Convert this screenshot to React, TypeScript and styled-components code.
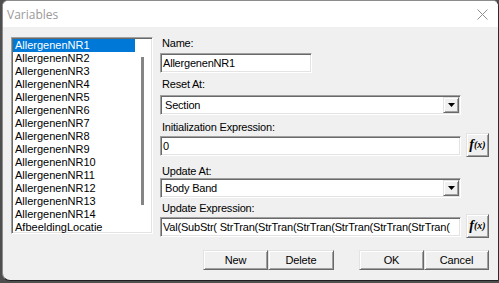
import styled, { createGlobalStyle } from "styled-components";

const GlobalStyle = createGlobalStyle`
  html, body {
    margin: 0;
    padding: 0;
  }
  body {
    width: 499px;
    height: 283px;
    overflow: hidden;
    background: #4f4f4f;
    font-family: "Liberation Sans", Arial, sans-serif;
    font-size: 11px;
    color: #000;
  }
`;

const variables = [
  "AllergenenNR1",
  "AllergenenNR2",
  "AllergenenNR3",
  "AllergenenNR4",
  "AllergenenNR5",
  "AllergenenNR6",
  "AllergenenNR7",
  "AllergenenNR8",
  "AllergenenNR9",
  "AllergenenNR10",
  "AllergenenNR11",
  "AllergenenNR12",
  "AllergenenNR13",
  "AllergenenNR14",
  "AfbeeldingLocatie",
];

const Window = styled.div`
  box-sizing: border-box;
  margin-left: 2px;
  width: 497px;
  height: 281px;
  background: #f0f0f0;
  border: 1px solid #8c8c8c;
  border-right-color: #2b2b2b;
  border-bottom-color: #1f1f1f;
  border-radius: 6px 6px 0 8px;
  overflow: hidden;
  display: flex;
  flex-direction: column;
`;

const TitleBar = styled.div`
  height: 26px;
  background: #fff;
  display: flex;
  align-items: center;
  justify-content: space-between;
  padding: 0 10px 0 4px;
  flex-shrink: 0;
`;

const Title = styled.span`
  font-family: "Open Sans", "Noto Sans", sans-serif;
  font-size: 12px;
  color: #9a9a9a;
  margin-top: 1px;
`;

const CloseIcon = () => (
  <svg width="11" height="11" viewBox="0 0 11 11">
    <path d="M0.5 0.5 L10.5 10.5 M10.5 0.5 L0.5 10.5" stroke="#8f8f8f" strokeWidth="1" fill="none" />
  </svg>
);

const Client = styled.div`
  flex: 1;
  display: flex;
  gap: 7px;
  padding: 10px 9px 0 8px;
`;

const ListBox = styled.div`
  box-sizing: border-box;
  position: relative;
  width: 142px;
  height: 197px;
  background: #fff;
  border: 1px solid;
  border-color: #a0a0a0 #fff #fff #a0a0a0;
  box-shadow: inset 1px 1px #696969, inset -1px -1px #e3e3e3;
  padding: 1px 17px 0 1px;
  overflow: hidden;
`;

const ListItem = styled.div<{ $selected?: boolean }>`
  height: 13px;
  line-height: 13px;
  padding-left: 2px;
  white-space: nowrap;
  background: ${(p) => (p.$selected ? "#0078d7" : "transparent")};
  color: ${(p) => (p.$selected ? "#fff" : "#000")};
`;

const ScrollThumb = styled.div`
  position: absolute;
  left: 129px;
  top: 19px;
  width: 3px;
  height: 148px;
  background: #858585;
`;

const Form = styled.div`
  width: 329px;
  display: flex;
  flex-direction: column;
`;

const Field = styled.div<{ $top: number; $gap: number }>`
  display: flex;
  flex-direction: column;
  gap: ${(p) => p.$gap}px;
  margin-top: ${(p) => p.$top}px;
`;

const Label = styled.label`
  height: 13px;
  line-height: 13px;
  padding-left: 2px;
  letter-spacing: -0.2px;
`;

const Row = styled.div`
  display: flex;
  align-items: center;
  gap: 5px;
  height: 20px;
`;

const TextBox = styled.div<{ $width: number }>`
  box-sizing: border-box;
  width: ${(p) => p.$width}px;
  height: 20px;
  background: #fff;
  border: 1px solid;
  border-color: #a0a0a0 #fff #fff #a0a0a0;
  box-shadow: inset 1px 1px #696969, inset -1px -1px #e3e3e3;
  padding: 0 2px 0 2px;
  line-height: 18px;
  white-space: nowrap;
  overflow: hidden;
  letter-spacing: -0.2px;
`;

const Select = styled(TextBox)`
  display: flex;
  align-items: center;
  justify-content: space-between;
  padding: 0 1px 0 4px;
`;

const DropButton = styled.div`
  box-sizing: border-box;
  width: 16px;
  height: 16px;
  background: #f0f0f0;
  border: 1px solid;
  border-color: #e3e3e3 #696969 #696969 #e3e3e3;
  box-shadow: inset 1px 1px #fff, inset -1px -1px #a0a0a0;
  display: flex;
  align-items: center;
  justify-content: center;
`;

const FxButton = styled.div`
  box-sizing: border-box;
  width: 23px;
  height: 24px;
  margin: -3px 0 -1px;
  background: #f0f0f0;
  border: 1px solid;
  border-color: #e3e3e3 #696969 #696969 #e3e3e3;
  box-shadow: inset 1px 1px #fff, inset -1px -1px #a0a0a0;
  display: flex;
  align-items: center;
  justify-content: center;
  font-family: "Liberation Serif", "Times New Roman", serif;
  font-weight: bold;
  line-height: 1;
`;

const FxF = styled.span`
  font-size: 14px;
  font-style: italic;
`;

const FxArg = styled.span`
  font-size: 10px;
  font-style: italic;
`;

const ButtonBar = styled.div`
  display: flex;
  justify-content: flex-end;
  gap: 25px;
  margin-top: 13px;
`;

const ButtonGroup = styled.div`
  display: flex;
`;

const PushButton = styled.button<{ $width: number }>`
  box-sizing: border-box;
  width: ${(p) => p.$width}px;
  height: 20px;
  padding: 0;
  background: #f0f0f0;
  border: 1px solid;
  border-color: #e3e3e3 #696969 #696969 #e3e3e3;
  box-shadow: inset 1px 1px #fff, inset -1px -1px #a0a0a0;
  font-family: "Liberation Sans", Arial, sans-serif;
  font-size: 11px;
  color: #000;
  letter-spacing: -0.1px;
`;

const Arrow = () => (
  <svg width="7" height="4" viewBox="0 0 7 4">
    <polygon points="0,0 7,0 3.5,4" fill="#000" />
  </svg>
);

const Fx = () => (
  <FxButton>
    <FxF>f</FxF>
    <FxArg>(x)</FxArg>
  </FxButton>
);

export default function App() {
  return (
    <>
      <GlobalStyle />
      <Window>
        <TitleBar>
          <Title>Variables</Title>
          <CloseIcon />
        </TitleBar>
        <Client>
          <ListBox>
            {variables.map((name, i) => (
              <ListItem key={name} $selected={i === 0}>
                {name}
              </ListItem>
            ))}
            <ScrollThumb />
          </ListBox>
          <Form>
            <Field $top={0} $gap={3}>
              <Label>Name:</Label>
              <TextBox $width={152}>AllergenenNR1</TextBox>
            </Field>
            <Field $top={5} $gap={4}>
              <Label>Reset At:</Label>
              <Select $width={301}>
                <span>Section</span>
                <DropButton>
                  <Arrow />
                </DropButton>
              </Select>
            </Field>
            <Field $top={6} $gap={2}>
              <Label>Initialization Expression:</Label>
              <Row>
                <TextBox $width={301}>0</TextBox>
                <Fx />
              </Row>
            </Field>
            <Field $top={9} $gap={0}>
              <Label>Update At:</Label>
              <Select $width={301}>
                <span>Body Band</span>
                <DropButton>
                  <Arrow />
                </DropButton>
              </Select>
            </Field>
            <Field $top={4} $gap={2}>
              <Label>Update Expression:</Label>
              <Row>
                <TextBox $width={301}>
                  Val(SubStr( StrTran(StrTran(StrTran(StrTran(StrTran(StrTran(
                </TextBox>
                <Fx />
              </Row>
            </Field>
            <ButtonBar>
              <ButtonGroup>
                <PushButton $width={65}>New</PushButton>
                <PushButton $width={66}>Delete</PushButton>
              </ButtonGroup>
              <ButtonGroup>
                <PushButton $width={65}>OK</PushButton>
                <PushButton $width={65}>Cancel</PushButton>
              </ButtonGroup>
            </ButtonBar>
          </Form>
        </Client>
      </Window>
    </>
  );
}
